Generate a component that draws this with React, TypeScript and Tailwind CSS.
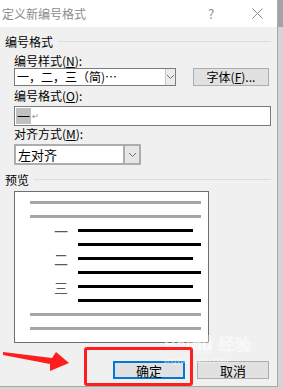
const font = { fontFamily: '"Noto Sans CJK SC", "Noto Sans", sans-serif' };

const Chevron = () => (
  <svg width="9" height="6" viewBox="0 0 9 6" fill="none">
    <path d="M1 1l3.5 3.5L8 1" stroke="#6d6d6d" strokeWidth="1" />
  </svg>
);

type Row = { kind: "gray" | "full" | "short"; num?: string };

const rows: Row[] = [
  { kind: "gray" },
  { kind: "gray" },
  { kind: "short", num: "一" },
  { kind: "full" },
  { kind: "short", num: "二" },
  { kind: "full" },
  { kind: "short", num: "三" },
  { kind: "full" },
  { kind: "gray" },
  { kind: "gray" },
];

const PreviewRow = ({ row }: { row: Row }) => {
  if (row.kind === "gray") {
    return (
      <div className="flex h-[3px] pl-[15px] pr-[7px]">
        <div className="h-[3px] flex-1 bg-[#a5a5a5]" />
      </div>
    );
  }
  return (
    <div className="flex h-[3px] items-center">
      <div className="flex w-[63px] justify-end pr-[10px]">
        <span className="text-[14px] leading-none text-[#5a5a5a]">{row.num ?? ""}</span>
      </div>
      <div className={row.kind === "full" ? "mr-[7px] h-[3px] flex-1 bg-black" : "mr-[15px] h-[3px] flex-1 bg-black"} />
    </div>
  );
};

const App = () => {
  return (
    <div className="relative flex h-[389px] w-[283px] overflow-hidden bg-[#d4d4d4] text-[12px] text-black" style={font}>
      <div className="flex h-[387px] w-[278px] flex-col border-r border-b border-[#a8a8a8] bg-[#f0f0f0]">
        {/* Title bar */}
        <div className="flex h-[27px] items-center bg-white pl-[2px]">
          <span className="text-[12px] leading-none text-[#8c8c8c]">定义新编号格式</span>
          <span className="ml-[122px] text-[13px] leading-none text-[#8c8c8c]">?</span>
          <svg className="ml-[38px]" width="11" height="11" viewBox="0 0 11 11">
            <path d="M0.5 0.5l10 10M10.5 0.5l-10 10" stroke="#8c8c8c" strokeWidth="1" />
          </svg>
        </div>

        <div className="flex flex-col pl-[5px] pr-[6px]">
          {/* 编号格式 group */}
          <div className="mt-[8px] flex h-[13px] items-center gap-[5px]">
            <span className="leading-none">编号格式</span>
            <div className="h-px flex-1 bg-[#dcdcdc]" />
          </div>

          <div className="ml-[9px] mt-[6px] h-[13px] leading-[13px]">
            编号样式(<u>N</u>):
          </div>
          <div className="ml-[9px] mt-[1px] flex h-[18px] items-stretch">
            <div className="flex w-[162px] items-stretch border border-[#7a7a7a] bg-white">
              <span className="flex-1 pl-[2px] leading-[16px]">一，二，三（简)⋯</span>
              <div className="flex w-[10px] items-center justify-center border-l border-[#c8c8c8] bg-[#ececec]">
                <Chevron />
              </div>
            </div>
            <button className="ml-[17px] flex w-[76px] items-center justify-center border border-[#adadad] bg-[#e1e1e1] leading-none">
              字体(<u>F</u>)...
            </button>
          </div>

          <div className="ml-[9px] mt-[3px] h-[13px] leading-[13px]">
            编号格式(<u>O</u>):
          </div>
          <div className="ml-[9px] mt-[4px] flex h-[20px] items-center border border-[#7a7a7a] bg-white pl-[1px]">
            <span className="bg-[#c0c0c0] px-[1px] text-[13px] leading-[16px]">一</span>
            <span className="ml-[1px] text-[8px] leading-none text-[#8a8a8a]">↵</span>
          </div>

          <div className="ml-[9px] mt-[1px] h-[13px] leading-[13px]">
            对齐方式(<u>M</u>):
          </div>
          <div className="ml-[9px] mt-[4px] flex h-[21px] w-[127px] items-stretch border-2 border-[#adadad] bg-white">
            <span className="flex-1 pl-[2px] text-[13px] leading-[17px]">左对齐</span>
            <div className="flex w-[16px] items-center justify-center border-l-2 border-[#adadad] bg-[#e6e6e6]">
              <Chevron />
            </div>
          </div>

          {/* 预览 group */}
          <div className="mt-[8px] flex h-[13px] items-center gap-[5px]">
            <span className="leading-none">预览</span>
            <div className="h-px flex-1 bg-[#dcdcdc]" />
          </div>
          <div className="ml-[9px] mt-[5px] flex h-[152px] w-[195px] flex-col gap-[11px] border border-[#6e6e6e] bg-white pt-[9px]">
            {rows.map((r, i) => (
              <PreviewRow key={i} row={r} />
            ))}
          </div>

          {/* Buttons */}
          <div className="mt-[18px] flex h-[18px] justify-end gap-[12px] pr-[2px]">
            <button className="flex w-[72px] items-center justify-center border-2 border-[#0078d7] bg-[#e1e1e1] text-[13px] leading-none">
              确定
            </button>
            <button className="flex w-[72px] items-center justify-center border border-[#adadad] bg-[#e1e1e1] text-[13px] leading-none">
              取消
            </button>
          </div>
        </div>
      </div>
      <div className="absolute right-0 top-0 h-[27px] w-[5px] bg-[#a3a3a3]" />

      {/* Watermark */}
      <div className="pointer-events-none absolute left-[164px] top-[336px] flex flex-col items-start text-white/60">
        <span className="text-[17px] font-bold leading-none" style={{ fontFamily: '"Liberation Sans", sans-serif' }}>
          Bai<span className="rounded-sm bg-white/30 px-[1px]">du</span> 经验
        </span>
        <span className="mt-[4px] text-[8px] leading-none" style={{ fontFamily: '"Liberation Sans", sans-serif' }}>
          jingyan.baidu.com
        </span>
      </div>

      {/* Red annotation */}
      <div className="pointer-events-none absolute left-[84px] top-[347px] h-[39px] w-[109px] rounded-[3px] border-[3px] border-[#ff1d1d]" />
      <svg className="pointer-events-none absolute left-0 top-[340px]" width="80" height="40" viewBox="0 0 80 40">
        <polygon points="3,12 52,18 56,12 69,23 50,31 50,24 3,15" fill="#ff1d1d" />
      </svg>
    </div>
  );
};

export default App;
